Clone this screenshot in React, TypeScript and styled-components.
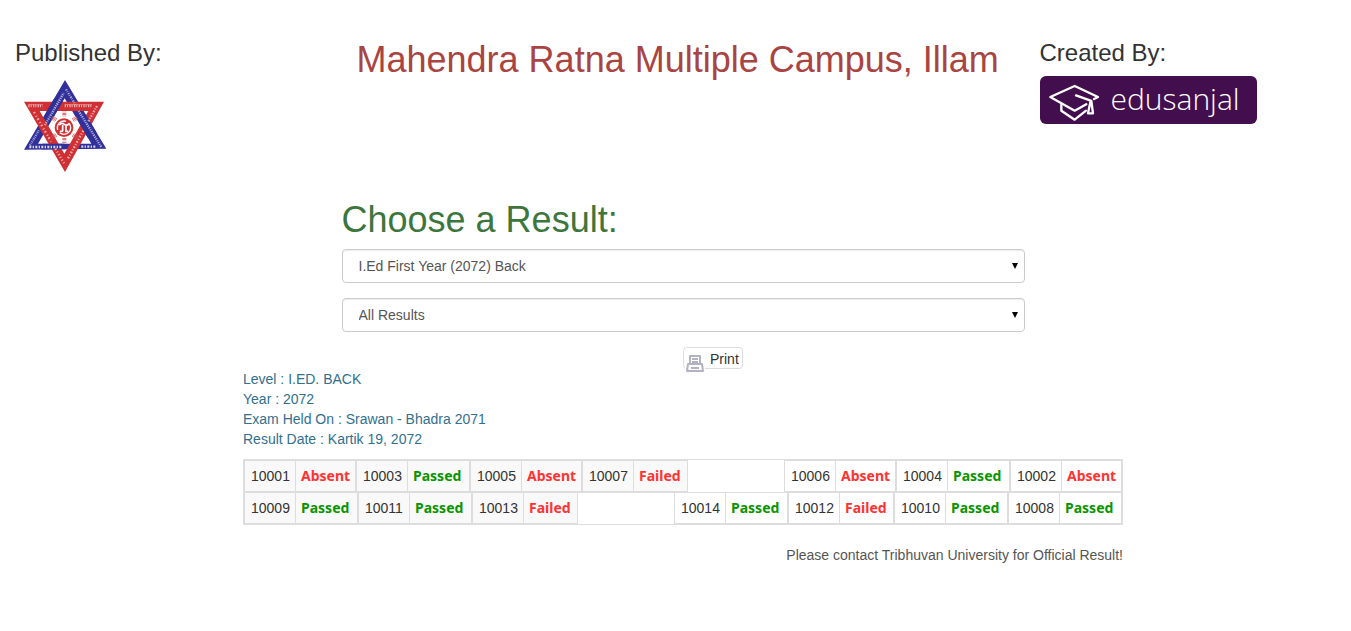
import React from "react";
import styled, { createGlobalStyle } from "styled-components";

type Status = "Absent" | "Passed" | "Failed";
type Result = [string, Status];

const resultRows: { left: Result[]; right: Result[] }[] = [
  {
    left: [["10001", "Absent"], ["10003", "Passed"], ["10005", "Absent"], ["10007", "Failed"]],
    right: [["10006", "Absent"], ["10004", "Passed"], ["10002", "Absent"]],
  },
  {
    left: [["10009", "Passed"], ["10011", "Passed"], ["10013", "Failed"]],
    right: [["10014", "Passed"], ["10012", "Failed"], ["10010", "Passed"], ["10008", "Passed"]],
  },
];

const statusWidths: Record<Status, number> = { Absent: 59, Passed: 61, Failed: 53 };

const GlobalStyle = createGlobalStyle`
  *, *::before, *::after { box-sizing: border-box; }
  body {
    margin: 0;
    overflow-x: hidden;
    background: #fff;
    color: #333;
    font: 14px/20px "Liberation Sans", Arial, sans-serif;
  }
`;

const Page = styled.div`
  margin-right: -15px;
  padding: 40px 0;
`;

const Columns = styled.div`
  display: grid;
  grid-template-columns: 1fr 2fr 1fr;
`;

const HeaderColumn = styled.div`
  padding: 0 15px;
`;

const Heading = styled.h1<{ $tone: "danger" | "success" }>`
  margin: 0 0 10px;
  font-size: 36px;
  line-height: 39px;
  font-weight: 400;
  white-space: nowrap;
  color: ${(p) => (p.$tone === "danger" ? "#a94442" : "#3c763d")};
`;

const Subheading = styled.h3`
  margin: 0 0 10px;
  font-size: 24px;
  line-height: 26px;
  font-weight: 400;
`;

const Emblem = styled.svg`
  display: block;
  width: 100px;
  height: 100px;
`;

const BrandLink = styled.a`
  display: flex;
  align-items: center;
  width: 217px;
  height: 48px;
  padding-left: 8px;
  gap: 10px;
  border-radius: 6px;
  background: #430e4e;
  color: #fff;
  text-decoration: none;
`;

const Cap = styled.svg`
  width: 53px;
  height: 40px;
  margin-top: 3px;
`;

const Wordmark = styled.span`
  font: 300 30px/40px "Open Sans", sans-serif;
  padding-bottom: 3px;
`;

const Chooser = styled.section`
  display: flex;
  flex-direction: column;
  width: 50%;
  margin: 24px auto 0;
`;

const SelectField = styled.label`
  display: flex;
  position: relative;
  margin-bottom: 15px;
`;

const Select = styled.select`
  appearance: none;
  width: 100%;
  height: 34px;
  padding: 6px 16px;
  border: 1px solid #ccc;
  border-radius: 4px;
  background: #fff;
  box-shadow: inset 0 1px 1px rgba(0, 0, 0, 0.075);
  color: #555;
  font: inherit;
`;

const Arrow = styled.svg`
  position: absolute;
  top: 13px;
  right: 6px;
  width: 8px;
  height: 7px;
  pointer-events: none;
`;

const PrintRow = styled.div`
  display: flex;
  padding-left: 50%;
`;

const PrintButton = styled.button`
  display: flex;
  align-items: flex-start;
  width: 60px;
  height: 22px;
  gap: 5px;
  padding: 0 1px;
  border: 1px solid #ddd;
  border-radius: 4px;
  background: #fff;
  color: #333;
  font: inherit;
  line-height: 22px;
`;

const PrinterIcon = styled.svg`
  flex: none;
  width: 20px;
  height: 20px;
  margin-top: 5px;
`;

const Report = styled.section`
  width: 880px;
  max-width: 100%;
  margin: 0 auto;
`;

const Details = styled.p`
  margin: 0 0 10px;
  color: #31708f;
`;

const Sheet = styled.div`
  border: 1px solid #ddd;
`;

const SheetRow = styled.div`
  display: flex;
  justify-content: space-between;
  & + & { box-shadow: inset 0 1px 0 #ddd; }
`;

const ResultGroup = styled.div`
  display: flex;
`;

const ResultTable = styled.table<{ $shaded: boolean }>`
  border: 1px solid #ddd;
  border-spacing: 0;
  background: ${(p) => (p.$shaded ? "#f9f9f9" : "#fff")};
`;

const RollNumber = styled.th`
  width: 51px;
  height: 30px;
  padding: 0 0 0 6px;
  border-right: 1px solid #ddd;
  font-weight: 400;
  text-align: left;
`;

const StatusCell = styled.td<{ $status: Status }>`
  width: ${(p) => statusWidths[p.$status]}px;
  height: 30px;
  padding: 0 0 0 5px;
  color: ${(p) => (p.$status === "Passed" ? "#0a9400" : "#ff3333")};
  font: 700 14px/20px "Noto Sans", sans-serif;
`;

const Notice = styled.p`
  margin: 20px 0 0;
  color: #555;
  text-align: right;
`;

function UniversityEmblem() {
  const blue = "M143 12L20 221L267 218ZM142 67L62 203H222Z";
  const red = "M20 77H260L143 288ZM67 105H213L141 233Z";
  return (
    <Emblem viewBox="-7 0 300 300" role="img" aria-label="Tribhuvan University">
      <defs>
        <clipPath id="crossings">
          <circle cx="116" cy="96" r="30" />
          <circle cx="208" cy="150" r="36" />
          <circle cx="108" cy="216" r="36" />
        </clipPath>
      </defs>
      <path d={blue} fill="#31309a" fillRule="evenodd" />
      <path d={red} fill="#d03034" fillRule="evenodd" />
      <path d={blue} fill="#31309a" fillRule="evenodd" clipPath="url(#crossings)" />
      <path d="M141 107V122M141 186V201M104 125L117 133M179 125L166 133M104 184L117 176M179 184L166 176" stroke="#d05055" strokeWidth="12" strokeDasharray="2 2" />
      <circle cx="140" cy="155" r="28" fill="#d03034" />
      <circle cx="140" cy="155" r="20" fill="none" stroke="#fff" strokeWidth="4" strokeDasharray="45 10" />
      <path d="M126 147Q134 139 141 145T155 143M136 147V164Q133 168 128 165M146 147V166H153" fill="none" stroke="#fff" strokeWidth="5" />
      <g fill="none" stroke="#fff" strokeOpacity="0.6" strokeWidth="7">
        <path d="M33 90H76M142 90H224" strokeDasharray="4 3 3 4" />
        <path d="M33 86H76M142 86H224" strokeWidth="2" />
        <path d="M83 147L139 51" strokeDasharray="3 3 4 3" />
        <path d="M38 208L66 161" strokeDasharray="3 3 2 3" />
        <path d="M146 40L174 85" strokeDasharray="4 3 2 4" />
        <path d="M184 105L252 213" strokeDasharray="3 3 4 3" />
        <path d="M50 108L101 197" strokeDasharray="5 8 3 6" />
        <path d="M114 218L141 263" strokeDasharray="4 6 3 6" />
        <path d="M239 90L211 140" strokeDasharray="5 4 3 4" />
        <path d="M198 164L150 251" strokeDasharray="5 5 3 5" />
        <path d="M36 213H134M192 212H237" strokeDasharray="6 4 4 4" strokeOpacity="0.8" />
      </g>
    </Emblem>
  );
}

function ResultList({ items, shaded }: { items: Result[]; shaded: boolean }) {
  return (
    <ResultGroup>
      {items.map(([roll, status]) => (
        <ResultTable key={roll} $shaded={shaded}>
          <tbody>
            <tr>
              <RollNumber scope="row">{roll}</RollNumber>
              <StatusCell $status={status}>{status}</StatusCell>
            </tr>
          </tbody>
        </ResultTable>
      ))}
    </ResultGroup>
  );
}

function ResultSelect({ label, option }: { label: string; option: string }) {
  return (
    <SelectField>
      <Select aria-label={label} defaultValue={option}>
        <option>{option}</option>
      </Select>
      <Arrow viewBox="0 0 8 7" aria-hidden="true">
        <path d="M1 1H7L4 7Z" stroke="none" />
      </Arrow>
    </SelectField>
  );
}

export default function App() {
  return (
    <>
      <GlobalStyle />
      <Page>
        <Columns as="header">
          <HeaderColumn>
            <Subheading>Published By:</Subheading>
            <UniversityEmblem />
          </HeaderColumn>
          <HeaderColumn>
            <Heading $tone="danger">Mahendra Ratna Multiple Campus, Illam</Heading>
          </HeaderColumn>
          <HeaderColumn>
            <Subheading>Created By:</Subheading>
            <BrandLink href="#">
              <Cap viewBox="32 22 159 120" fill="none" stroke="#fff" strokeWidth="7" strokeLinejoin="round" strokeLinecap="round" aria-hidden="true">
                <path d="M147 89L112 108L39 67L112 34L182 67L170 73" />
                <path d="M116 62L160 78L152 116H167L162 79" />
                <path d="M72 90V108L112 135L146 108" />
              </Cap>
              <Wordmark>edusanjal</Wordmark>
            </BrandLink>
          </HeaderColumn>
        </Columns>

        <Chooser>
          <Heading $tone="success">Choose a Result:</Heading>
          <ResultSelect label="Exam" option="I.Ed First Year (2072) Back" />
          <ResultSelect label="Result filter" option="All Results" />
        </Chooser>

        <PrintRow>
          <PrintButton type="button">
            <PrinterIcon viewBox="0 0 20 20" aria-hidden="true">
              <path d="M0 0H20V20H0Z" fill="#fff" />
              <g fill="none" stroke="#b3b2c4" strokeWidth="2" strokeLinejoin="round">
                <path d="M5 11V3H15V11" />
                <path d="M3 11H17L18 18H2Z" />
                <path d="M7 6H13M7 9H13M6 15H14" />
              </g>
            </PrinterIcon>
            Print
          </PrintButton>
        </PrintRow>

        <Report>
          <Details>
            Level : I.ED. BACK<br />
            Year : 2072<br />
            Exam Held On : Srawan - Bhadra 2071<br />
            Result Date : Kartik 19, 2072
          </Details>
          <Sheet>
            {resultRows.map((row) => (
              <SheetRow key={row.left[0][0]}>
                <ResultList items={row.left} shaded />
                <ResultList items={row.right} shaded={false} />
              </SheetRow>
            ))}
          </Sheet>
          <Notice>Please contact Tribhuvan University for Official Result!</Notice>
        </Report>
      </Page>
    </>
  );
}
